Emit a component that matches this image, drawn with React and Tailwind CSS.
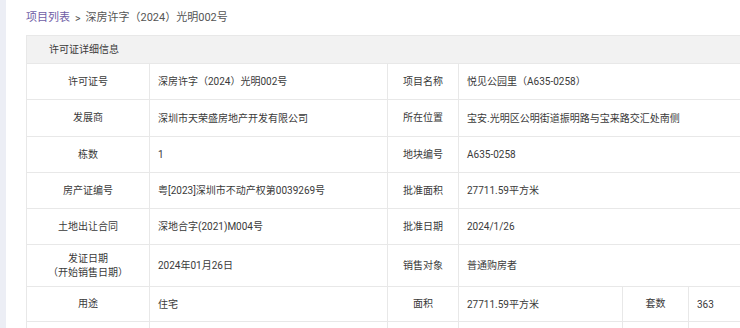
import React from "react";

const font = { fontFamily: 'Roboto, "Noto Sans CJK SC", sans-serif' };

const L = ({ children, colSpan }) => (
  <td colSpan={colSpan} className="border border-[#e8e8e8] text-center text-[#3a3a3a] leading-[14px] px-1">
    {children}
  </td>
);
const V = ({ children, colSpan }) => (
  <td colSpan={colSpan} className="border border-[#e8e8e8] text-left text-[#3a3a3a] pl-2">
    {children}
  </td>
);

export default function App() {
  return (
    <div className="flex w-[740px] h-[328px] overflow-hidden bg-white" style={font}>
      <div className="w-[6px] shrink-0 bg-[#eceef5]" />
      <div className="flex-1 pl-5 overflow-hidden">
        <div className="h-[35px] flex items-center text-[11px] text-[#555] pt-[2px]">
          <span className="text-[#6f5ea6]">项目列表</span>
          <span className="mx-[5px] text-[10.5px]">&gt;</span>
          <span>深房许字（2024）光明002号</span>
        </div>
        <table className="border-collapse text-[10px] table-fixed w-[760px]">
          <colgroup>
            <col className="w-[123px]" />
            <col className="w-[238px]" />
            <col className="w-[71px]" />
            <col className="w-[164px]" />
            <col className="w-[66px]" />
            <col className="w-[98px]" />
          </colgroup>
          <tbody>
            <tr className="h-[28px] bg-[#f2f2f2]">
              <td colSpan={6} className="border border-[#e8e8e8] pl-[22px] text-[#3a3a3a]">许可证详细信息</td>
            </tr>
            <tr className="h-[36px]">
              <L>许可证号</L>
              <V>深房许字（2024）光明002号</V>
              <L>项目名称</L>
              <V colSpan={3}>悦见公园里（A635-0258）</V>
            </tr>
            <tr className="h-[37px]">
              <L>发展商</L>
              <V>深圳市天荣盛房地产开发有限公司</V>
              <L>所在位置</L>
              <V colSpan={3}>宝安.光明区公明街道振明路与宝来路交汇处南侧</V>
            </tr>
            <tr className="h-[36px]">
              <L>栋数</L>
              <V>1</V>
              <L>地块编号</L>
              <V colSpan={3}>A635-0258</V>
            </tr>
            <tr className="h-[36px]">
              <L>房产证编号</L>
              <V>粤[2023]深圳市不动产权第0039269号</V>
              <L>批准面积</L>
              <V colSpan={3}>27711.59平方米</V>
            </tr>
            <tr className="h-[36px]">
              <L>土地出让合同</L>
              <V>深地合字(2021)M004号</V>
              <L>批准日期</L>
              <V colSpan={3}>2024/1/26</V>
            </tr>
            <tr className="h-[42px]">
              <L>
                发证日期
                <br />
                （开始销售日期）
              </L>
              <V>2024年01月26日</V>
              <L>销售对象</L>
              <V colSpan={3}>普通购房者</V>
            </tr>
            <tr className="h-[35px]">
              <L>用途</L>
              <V>住宅</V>
              <L>面积</L>
              <V>27711.59平方米</V>
              <L>套数</L>
              <V>363</V>
            </tr>
            <tr className="h-[36px]">
              <L>&nbsp;</L>
              <V>&nbsp;</V>
              <L>&nbsp;</L>
              <V>&nbsp;</V>
              <L>&nbsp;</L>
              <V>&nbsp;</V>
            </tr>
          </tbody>
        </table>
      </div>
    </div>
  );
}
